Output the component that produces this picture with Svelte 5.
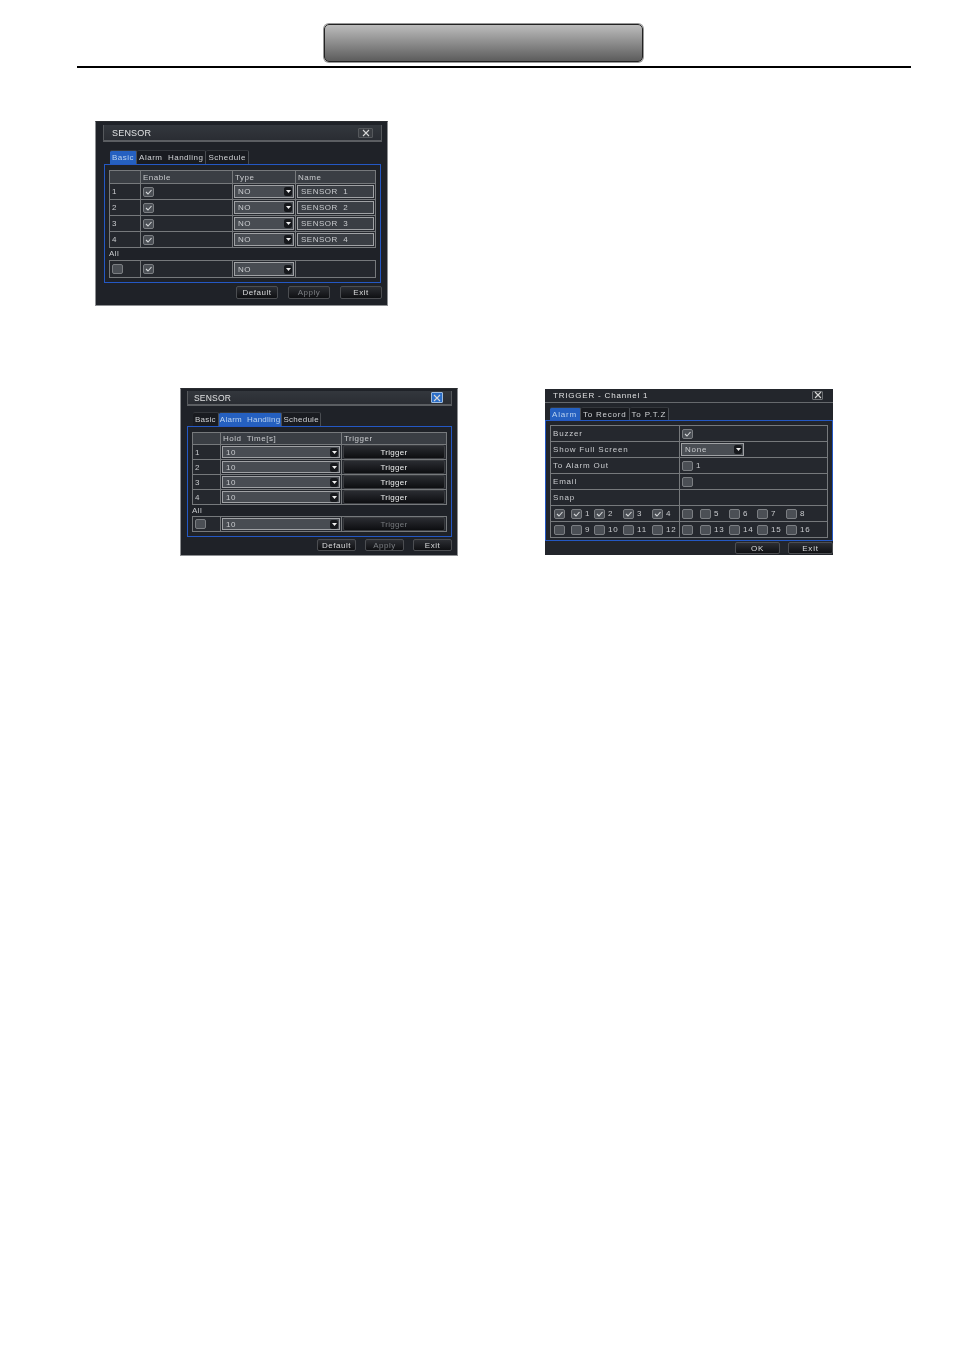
<script>
	const sensors = [1, 2, 3, 4];
	const snapTop = ['', '1', '2', '3', '4'];
	const snapBottom = ['', '9', '10', '11', '12'];
	const snapTopRight = ['', '5', '6', '7', '8'];
	const snapBottomRight = ['', '13', '14', '15', '16'];
	const leftGaps = [17, 23, 29, 29, 26];
	const rightGaps = [18, 29, 28, 29, 26];
</script>

{#snippet check(on)}
	<span class="check">
		{#if on}
			<svg width="7" height="6" viewBox="0 0 7 6"><path d="M1 3 L3 5 L6.500 1" fill="none" stroke="#d4d6d8" stroke-width="1.100" /></svg>
		{/if}
	</span>
{/snippet}

{#snippet select(value, cls = '')}
	<span class="select {cls}">
		<span class="select-value">{value}</span>
		<span class="arrow"><svg width="5" height="3" viewBox="0 0 5 3"><path d="M0 0 H5 L2.500 3 Z" fill="#f0f0f0" /></svg></span>
	</span>
{/snippet}

{#snippet closeIcon()}
	<svg width="8" height="8" viewBox="0 0 8 8"><path d="M1 1 L7 7 M7 1 L1 7" stroke="#d8d8d8" stroke-width="1.100" /></svg>
{/snippet}

{#snippet titleBar(title, closeCls = '')}
	<div class="title-bar">
		<span class="title">{title}</span>
		<span class="close {closeCls}">
			{@render closeIcon()}
		</span>
	</div>
{/snippet}

{#snippet snapRow(items, on, gaps)}
	<div class="snap-row">
		{#each items as label, i}
			<span class="snap-item" style="width: {gaps[i]}px">
				{@render check(on)}
				{#if label}<span class="snap-label">{label}</span>{/if}
			</span>
		{/each}
	</div>
{/snippet}

<header class="page-head">
	<div class="chapter"></div>
</header>

<main class="page">
	<section class="dialog sensor-basic">
		{@render titleBar('SENSOR')}
		<div class="tabs">
			<span class="tab active">Basic</span>
			<span class="tab">Alarm&nbsp; Handling</span>
			<span class="tab">Schedule</span>
		</div>
		<div class="panel">
			<div class="table basic-cols">
				<div class="row head">
					<span class="cell"></span>
					<span class="cell">Enable</span>
					<span class="cell">Type</span>
					<span class="cell">Name</span>
				</div>
				{#each sensors as n}
					<div class="row">
						<span class="cell">{n}</span>
						<span class="cell">{@render check(true)}</span>
						<span class="cell tight">{@render select('NO')}</span>
						<span class="cell tight"><span class="input">SENSOR&nbsp; {n}</span></span>
					</div>
				{/each}
			</div>
			<div class="all-label">All</div>
			<div class="table basic-cols all-row">
				<div class="row">
					<span class="cell">{@render check(false)}</span>
					<span class="cell">{@render check(true)}</span>
					<span class="cell tight">{@render select('NO')}</span>
					<span class="cell"></span>
				</div>
			</div>
		</div>
		<div class="actions">
			<span class="btn">Default</span>
			<span class="btn muted">Apply</span>
			<span class="btn">Exit</span>
		</div>
	</section>

	<div class="lower">
		<section class="dialog sensor-alarm">
			{@render titleBar('SENSOR', 'blue')}
			<div class="tabs">
				<span class="tab">Basic</span>
				<span class="tab active">Alarm&nbsp; Handling</span>
				<span class="tab">Schedule</span>
			</div>
			<div class="panel">
				<div class="table alarm-cols">
					<div class="row head">
						<span class="cell"></span>
						<span class="cell">Hold&nbsp; Time[s]</span>
						<span class="cell">Trigger</span>
					</div>
					{#each sensors as n}
						<div class="row">
							<span class="cell">{n}</span>
							<span class="cell tight">{@render select('10')}</span>
							<span class="cell tight"><span class="trigger">Trigger</span></span>
						</div>
					{/each}
				</div>
				<div class="all-label">All</div>
				<div class="table alarm-cols all-row">
					<div class="row">
						<span class="cell">{@render check(false)}</span>
						<span class="cell tight">{@render select('10')}</span>
						<span class="cell tight"><span class="trigger muted">Trigger</span></span>
					</div>
				</div>
			</div>
			<div class="actions">
				<span class="btn">Default</span>
				<span class="btn muted">Apply</span>
				<span class="btn">Exit</span>
			</div>
		</section>

		<section class="dialog trigger-dialog">
			<div class="title-bar flat">
				<span class="title">TRIGGER - Channel 1</span>
				<span class="close">{@render closeIcon()}</span>
			</div>
			<div class="tabs">
				<span class="tab active">Alarm</span>
				<span class="tab">To Record</span>
				<span class="tab">To P.T.Z</span>
			</div>
			<div class="panel">
				<div class="table trigger-cols">
					<div class="row"><span class="cell">Buzzer</span><span class="cell">{@render check(true)}</span></div>
					<div class="row"><span class="cell">Show Full Screen</span><span class="cell tight">{@render select('None', 'small')}</span></div>
					<div class="row"><span class="cell">To Alarm Out</span><span class="cell">{@render check(false)}<span class="snap-label">1</span></span></div>
					<div class="row"><span class="cell">Email</span><span class="cell">{@render check(false)}</span></div>
					<div class="row"><span class="cell">Snap</span><span class="cell"></span></div>
					<div class="row">
						<span class="cell">{@render snapRow(snapTop, true, leftGaps)}</span>
						<span class="cell">{@render snapRow(snapTopRight, false, rightGaps)}</span>
					</div>
					<div class="row">
						<span class="cell">{@render snapRow(snapBottom, false, leftGaps)}</span>
						<span class="cell">{@render snapRow(snapBottomRight, false, rightGaps)}</span>
					</div>
				</div>
			</div>
			<div class="actions">
				<span class="btn wide">OK</span>
				<span class="btn wide">Exit</span>
			</div>
		</section>
	</div>
</main>

<style>
	:global(body) {
		background: #fff;
		font-family: 'Liberation Sans', Arial, sans-serif;
	}

	.page-head {
		margin: 0 43px 0 77px;
		padding-top: 24px;
		height: 42px;
		border-bottom: 2px solid #000;
	}

	.chapter {
		width: 317px;
		height: 36px;
		margin-left: 247px;
		border: 1px solid #222;
		border-radius: 5px;
		background: linear-gradient(#bcbcbc, #5c5c5c);
		box-shadow: 0 0 0 1px #999;
	}

	.page {
		height: 1282px;
	}

	.dialog {
		box-sizing: border-box;
		background: #1f2228;
		color: #c9cbce;
		font-size: 8px;
		letter-spacing: 0.5px;
		border: 1px solid #8e9093;
		border-top-color: #2a2c30;
		filter: blur(0.25px);
	}

	.sensor-basic {
		width: 293px;
		height: 185px;
		margin: 53px 0 0 95px;
	}

	.lower {
		display: flex;
		margin: 82px 0 0 180px;
		align-items: flex-start;
	}

	.sensor-alarm {
		width: 278px;
		height: 168px;
	}

	.trigger-dialog {
		width: 288px;
		height: 166px;
		margin: 1px 0 0 87px;
		border: 0;
		background: #22252b;
		letter-spacing: 0.8px;
	}

	.title-bar {
		box-sizing: border-box;
		display: flex;
		align-items: center;
		justify-content: space-between;
		height: 17px;
		margin: 3px 5px 0 7px;
		padding: 0 8px;
		background: linear-gradient(#33373d, #2a2d33);
		border: 1px solid #55585c;
		border-top: 0;
		border-bottom: 2px solid #5b5e62;
	}

	.sensor-alarm .title-bar {
		height: 15px;
		margin: 2px 5px 0 6px;
		padding: 0 8px 0 6px;
	}

	.sensor-alarm .title {
		font-size: 8.500px;
	}

	.title-bar.flat {
		height: 14px;
		margin: 0;
		padding: 0 10px 1px 8px;
		border: 0;
		border-bottom: 1px solid #66696d;
		background: #23262c;
	}

	.title {
		font-size: 9px;
		letter-spacing: 0.2px;
		color: #e0e1e2;
	}

	.flat .title {
		font-size: 8px;
		letter-spacing: 0.800px;
	}

	.close {
		box-sizing: border-box;
		display: flex;
		align-items: center;
		justify-content: center;
		width: 15px;
		height: 10px;
		background: #3a3d42;
		border: 1px solid #55585c;
		border-radius: 1px;
	}

	.sensor-alarm .close {
		width: 12px;
		height: 11px;
	}

	.flat .close {
		width: 11px;
		height: 9px;
		background: #2a2d32;
		border-color: #6e7175;
	}

	.close.blue {
		background: #2b6ec8;
		border-color: #9fbde0;
	}

	.tabs {
		display: flex;
		height: 14px;
		margin: 8px 0 0 14px;
	}

	.sensor-alarm .tabs {
		margin: 6px 0 0 12px;
		letter-spacing: 0.25px;
	}

	.trigger-dialog .tabs {
		height: 13px;
		margin: 4px 0 0 5px;
	}

	.tab {
		display: flex;
		align-items: center;
		padding: 0 2px;
		background: #191b20;
		border-right: 1px solid #4a4d52;
		border-top: 1px solid #34373c;
		border-radius: 2px 2px 0 0;
		color: #d0d2d5;
		white-space: nowrap;
	}

	.sensor-alarm .tab {
		padding: 0 1px;
	}

	.sensor-alarm .tab:first-child {
		padding: 0 2px;
	}

	.trigger-dialog .tab:first-child {
		padding: 0 3px 0 2px;
	}

	.tab.active {
		background: #2560c0;
		color: #b9d2ef;
	}

	.panel {
		box-sizing: border-box;
		border: 1px solid #2458c4;
		margin: 0 6px 0 8px;
		padding: 5px 4px 0;
		height: 119px;
	}

	.sensor-alarm .panel {
		margin: 0 5px 0 6px;
		height: 111px;
	}

	.trigger-dialog .panel {
		margin: 0;
		padding: 4px 4px 0;
		height: 121px;
	}

	.table {
		border: 1px solid #76797c;
	}

	.row {
		display: grid;
		grid-template-columns: var(--cols);
		height: 15px;
		border-bottom: 1px solid #76797c;
	}

	.row:last-child {
		border-bottom: 0;
	}

	.row.head {
		height: 12px;
		background: #3a3e44;
	}

	.cell {
		display: flex;
		align-items: center;
		padding-left: 2px;
		border-right: 1px solid #76797c;
		background: #25282e;
		min-width: 0;
		white-space: nowrap;
	}

	.head .cell {
		background: #3a3e44;
	}

	.cell:last-child {
		border-right: 0;
	}

	.cell.tight {
		padding: 1px;
	}

	.basic-cols {
		--cols: 31px 92px 63px 1fr;
	}

	.alarm-cols {
		--cols: 28px 121px 1fr;
	}

	.alarm-cols .row {
		height: 14px;
	}

	.alarm-cols .row.head {
		height: 11px;
	}

	.trigger-cols {
		--cols: 129px 1fr;
	}

	.trigger-cols .row:nth-last-child(-n + 2) .cell:first-child {
		padding-left: 3px;
	}

	.all-label {
		height: 12px;
		line-height: 12px;
	}

	.all-row .row {
		height: 16px;
	}

	.sensor-alarm .all-label {
		height: 11px;
		line-height: 11px;
	}

	.sensor-alarm .all-row .row {
		height: 14px;
	}

	.check {
		box-sizing: border-box;
		display: inline-flex;
		align-items: center;
		justify-content: center;
		flex: none;
		width: 11px;
		height: 10px;
		background: #4b4f55;
		border: 1px solid #7b7e82;
		border-radius: 2px;
	}

	.select {
		box-sizing: border-box;
		display: flex;
		align-items: center;
		justify-content: space-between;
		width: 100%;
		height: 100%;
		background: #484c52;
		border: 1px solid #a0a2a5;
		padding: 0 1px 0 3px;
	}

	.select.small {
		width: 63px;
		background: #494d53;
	}

	.arrow {
		display: flex;
		align-items: center;
		justify-content: center;
		width: 8px;
		height: 9px;
		background: #16181c;
		border-radius: 2px;
	}

	.input {
		box-sizing: border-box;
		display: flex;
		align-items: center;
		width: 100%;
		height: 100%;
		padding-left: 3px;
		background: #3a3e44;
		border: 1px solid #a0a2a5;
	}

	.trigger {
		display: flex;
		align-items: center;
		justify-content: center;
		width: 100%;
		height: 100%;
		background: linear-gradient(#2a2c31, #0d0e11);
		border: 1px solid #3a3c40;
		border-radius: 2px;
		color: #eceded;
		letter-spacing: 0.3px;
	}

	.trigger.muted {
		color: #777a7e;
	}

	.actions {
		display: flex;
		justify-content: flex-end;
		gap: 10px;
		margin: 3px 5px 0 0;
	}

	.sensor-alarm .actions {
		gap: 9px;
		margin-top: 2px;
	}

	.trigger-dialog .actions {
		gap: 8px;
		margin: 1px 0 0 0;
	}

	.btn {
		box-sizing: border-box;
		display: flex;
		align-items: center;
		justify-content: center;
		width: 42px;
		height: 13px;
		background: linear-gradient(#2c2e33, #0f1013);
		border: 1px solid #4c4e52;
		border-radius: 2px;
		color: #d8d9da;
	}

	.sensor-alarm .btn {
		width: 39px;
		height: 12px;
	}

	.btn.muted {
		color: #7c7f83;
	}

	.btn.wide {
		width: 45px;
		height: 12px;
	}

	.snap-row {
		display: flex;
		align-items: center;
	}

	.snap-item {
		display: flex;
		align-items: center;
		flex: none;
	}

	.snap-label {
		margin-left: 3px;
	}
</style>
